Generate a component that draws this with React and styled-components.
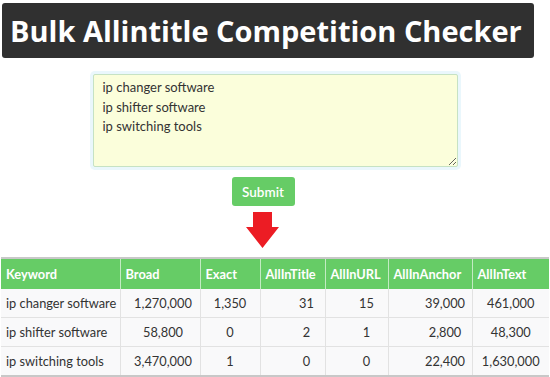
import React from "react";
import styled, { createGlobalStyle } from "styled-components";

const GlobalStyle = createGlobalStyle`
  body {
    margin: 0;
    background: #ffffff;
    font-family: Lato, "Open Sans", sans-serif;
    color: #333333;
  }
`;

const Page = styled.div`
  width: 550px;
  display: flex;
  flex-direction: column;
`;

const TitleBar = styled.h1`
  margin: 3px 16px 0 2px;
  height: 55px;
  background-color: #303030;
  border-radius: 3px;
  color: #ffffff;
  font-family: "Open Sans", Lato, sans-serif;
  font-size: 29px;
  font-weight: 700;
  line-height: 55px;
  padding-left: 8px;
  letter-spacing: 0;
  white-space: nowrap;
`;

const Form = styled.div`
  display: flex;
  flex-direction: column;
  align-items: center;
  padding-top: 16px;
`;

const Keywords = styled.textarea`
  box-sizing: border-box;
  width: 365px;
  height: 93px;
  padding: 3px 9px;
  background-color: #fbfedb;
  border: 1px solid #c6e2c4;
  border-radius: 2px;
  box-shadow: 0 0 0 3px #eaf7fc;
  font-family: Lato, "Open Sans", sans-serif;
  font-size: 13px;
  line-height: 19.5px;
  color: #333333;
  outline: none;
`;

const Actions = styled.div`
  display: flex;
  flex-direction: column;
  align-items: center;
  margin-right: 24px;
  margin-top: 10px;
`;

const SubmitButton = styled.button`
  width: 63px;
  height: 29px;
  border: none;
  border-radius: 3px;
  background-color: #66cc66;
  color: #ffffff;
  font-family: Lato, "Open Sans", sans-serif;
  font-size: 13.5px;
  font-weight: 600;
  padding: 0;
  cursor: pointer;
`;

const Arrow = styled.svg`
  display: block;
  margin-top: 6px;
`;

const Table = styled.table`
  margin: 8px 0 0 1px;
  width: 548px;
  table-layout: fixed;
  border-collapse: collapse;
  border-top: 2px solid #c8c8c8;
  border-bottom: 2px solid #c8c8c8;
  font-size: 12.8px;
`;

const HeadCell = styled.th`
  height: 30px;
  padding: 0 0 0 5px;
  background-color: #66cc66;
  color: #ffffff;
  font-weight: 700;
  text-align: left;
  border-right: 1px solid #c3ebc3;
  white-space: nowrap;
  &:last-child {
    border-right: none;
  }
`;

const Cell = styled.td`
  height: 28px;
  background-color: #f9f9fa;
  text-align: ${({ $left }) => ($left ? "left" : "center")};
  padding: 0 0 0 ${({ $left, $shift }) => ($left ? 5 : $shift || 0)}px;
  border: 1px solid #e2e2e2;
  border-top: none;
  white-space: nowrap;
  &:first-child {
    border-left: none;
  }
  &:last-child {
    border-right: none;
  }
`;

const columns = [
  { name: "Keyword", width: 119, left: true },
  { name: "Broad", width: 80, shift: 6 },
  { name: "Exact", width: 60 },
  { name: "AllInTitle", width: 65, shift: 28 },
  { name: "AllInURL", width: 63, shift: 20 },
  { name: "AllInAnchor", width: 84, shift: 30 },
  { name: "AllInText", width: 77 },
];

const rows = [
  ["ip changer software", "1,270,000", "1,350", "31", "15", "39,000", "461,000"],
  ["ip shifter software", "58,800", "0", "2", "1", "2,800", "48,300"],
  ["ip switching tools", "3,470,000", "1", "0", "0", "22,400", "1,630,000"],
];

export default function App() {
  return (
    <Page>
      <GlobalStyle />
      <TitleBar>Bulk Allintitle Competition Checker</TitleBar>
      <Form>
        <Keywords
          defaultValue={"ip changer software\nip shifter software\nip switching tools"}
        />
        <Actions>
          <SubmitButton>Submit</SubmitButton>
          <Arrow width="34" height="37" viewBox="0 0 34 37">
            <path d="M7 0 H26 V15 H33 L16.5 36 L0 15 H7 Z" fill="#ec1c24" />
          </Arrow>
        </Actions>
      </Form>
      <Table>
        <colgroup>
          {columns.map((c) => (
            <col key={c.name} style={{ width: c.width }} />
          ))}
        </colgroup>
        <thead>
          <tr>
            {columns.map((c) => (
              <HeadCell key={c.name}>{c.name}</HeadCell>
            ))}
          </tr>
        </thead>
        <tbody>
          {rows.map((r) => (
            <tr key={r[0]}>
              {r.map((v, i) => (
                <Cell key={i} $left={columns[i].left} $shift={columns[i].shift}>
                  {v}
                </Cell>
              ))}
            </tr>
          ))}
        </tbody>
      </Table>
    </Page>
  );
}
